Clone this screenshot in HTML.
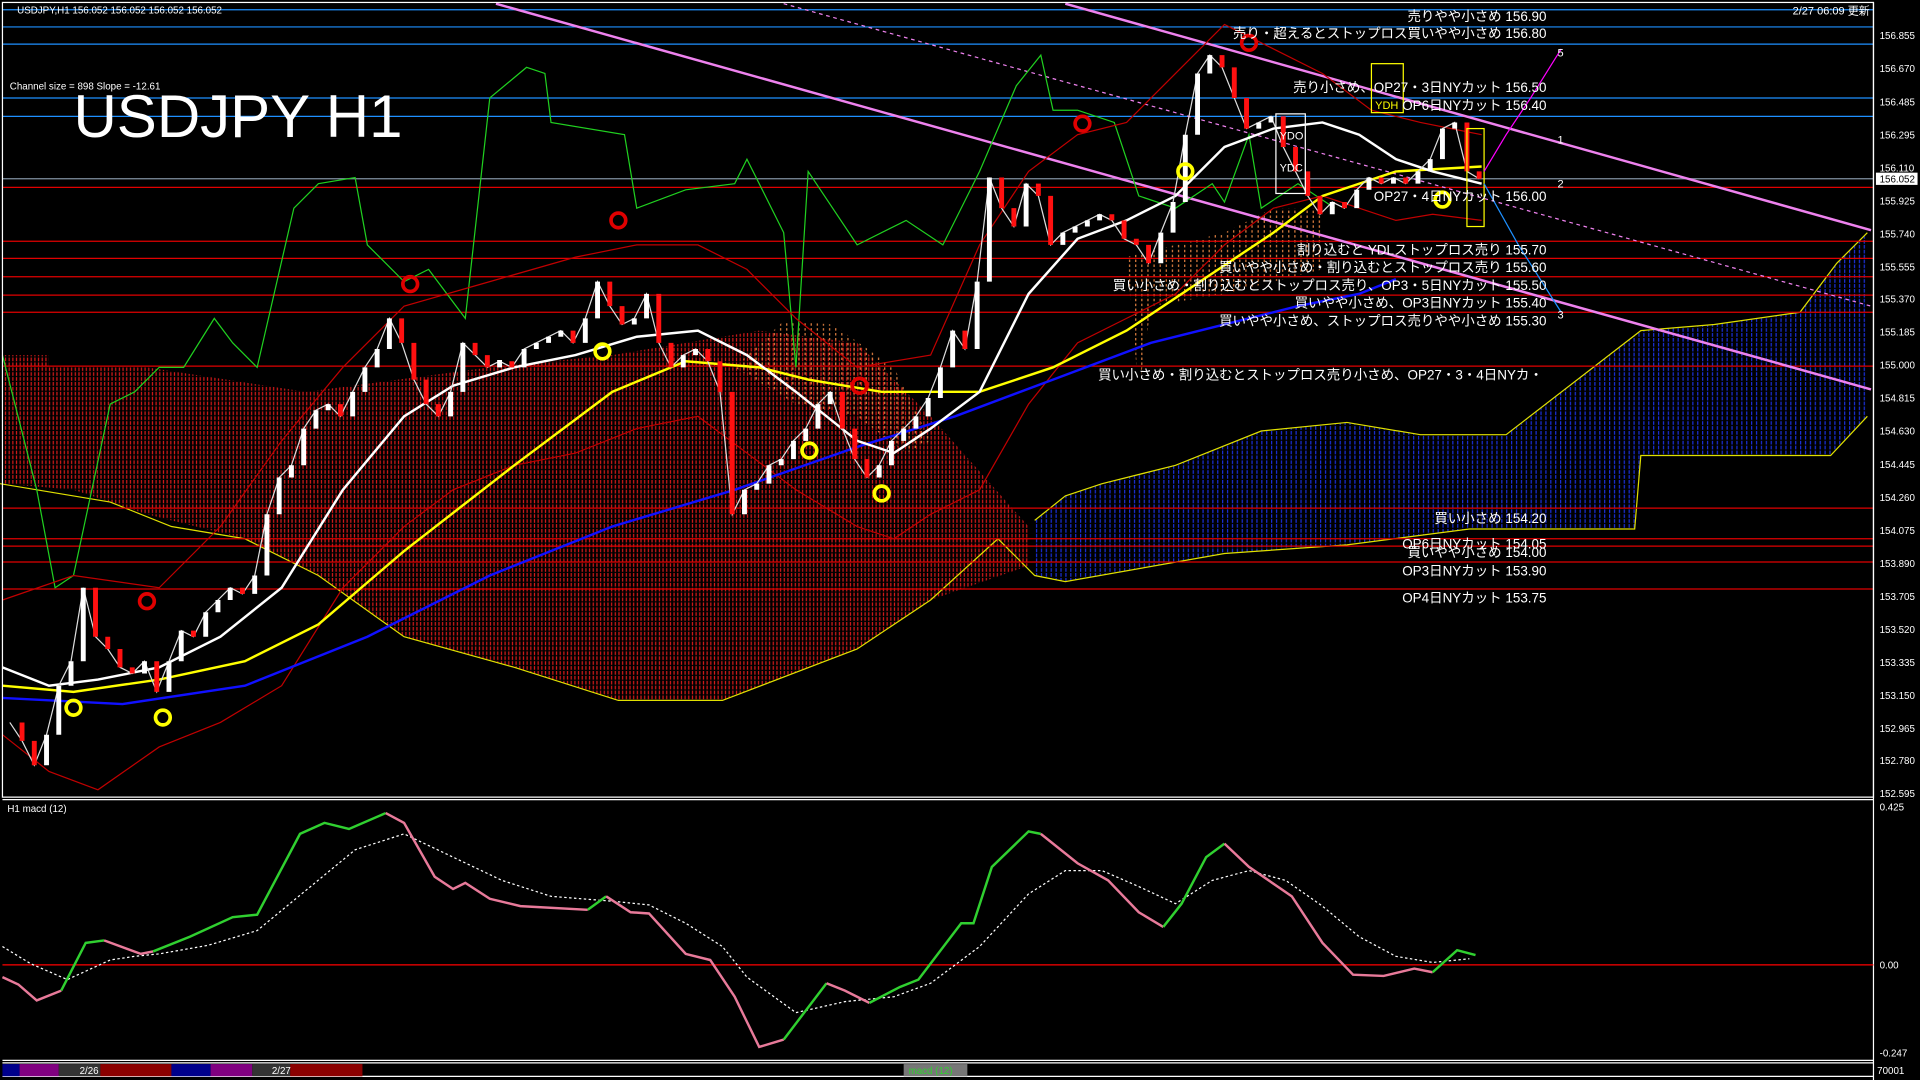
<!DOCTYPE html>
<html><head><meta charset="utf-8"><style>
html,body{margin:0;padding:0;background:#000;overflow:hidden}
svg{display:block}
text{font-family:"Liberation Sans","Noto Sans CJK JP",sans-serif;fill:#fff}
</style></head><body>
<svg width="1920" height="1080" viewBox="0 0 1568 882" preserveAspectRatio="none" xmlns="http://www.w3.org/2000/svg">
<defs>
<pattern id="rd" width="3" height="4" patternUnits="userSpaceOnUse"><rect x="1" y="0" width="1" height="3" fill="#d41a1a"/></pattern>
<pattern id="od" width="5" height="4" patternUnits="userSpaceOnUse"><rect x="2" y="0" width="1" height="2" fill="#e08040"/></pattern>
<pattern id="bd" width="4" height="4" patternUnits="userSpaceOnUse"><rect x="2" y="0" width="1" height="3" fill="#1a2fd8"/></pattern>
</defs>
<rect width="1568" height="882" fill="#000"/>
<!-- clouds -->
<polygon fill="url(#rd)" points="2,290 40,290 40,300 120,300 250,320 400,300 500,290 620,270 700,280 760,340 840,430 840,462 760,490 700,530 590,572 505,572 420,545 330,520 260,470 200,440 120,420 60,400 2,395"/>
<polygon fill="url(#od)" points="600,300 640,262 680,265 730,300 760,360 740,370 700,340 650,330"/>
<polygon fill="url(#od)" points="920,210 960,200 1000,190 1040,170 1080,170 1080,220 1000,240 940,250 930,320"/>
<polygon fill="url(#bd)" points="845,425 870,405 900,395 960,380 1030,352 1100,345 1160,355 1230,355 1340,270 1400,265 1470,255 1500,215 1525,190 1525,340 1495,372 1340,372 1335,432 1200,432 1100,445 1000,452 870,475 845,470"/>
<polyline fill="none" stroke="#e0e000" stroke-width="1" points="845,425 870,405 900,395 960,380 1030,352 1100,345 1160,355 1230,355 1340,270 1400,265 1470,255 1500,215 1525,190"/>
<polyline fill="none" stroke="#e0e000" stroke-width="1" points="0,395 90,410 140,430 200,440 260,470 330,520 420,545 505,572 590,572 700,530 760,490 815,440 845,470 870,475 1000,452 1100,445 1200,432 1335,432 1340,372 1495,372 1525,340"/>
<!-- horizontal lines -->
<g stroke="#1e90ff" stroke-width="1"><line x1="2" y1="8" x2="1530" y2="8"/><line x1="2" y1="22" x2="1530" y2="22"/><line x1="2" y1="36" x2="1530" y2="36"/><line x1="2" y1="80" x2="1530" y2="80"/><line x1="2" y1="95" x2="1530" y2="95"/></g>
<line x1="2" y1="146" x2="1530" y2="146" stroke="#8090a0"/>
<g stroke="#e00000" stroke-width="1"><line x1="2" y1="153" x2="1530" y2="153"/><line x1="2" y1="197" x2="1530" y2="197"/><line x1="2" y1="211" x2="1530" y2="211"/><line x1="2" y1="226" x2="1530" y2="226"/><line x1="2" y1="241" x2="1530" y2="241"/><line x1="2" y1="255" x2="1530" y2="255"/><line x1="2" y1="299" x2="1530" y2="299"/><line x1="2" y1="415" x2="1530" y2="415"/><line x1="2" y1="440" x2="1530" y2="440"/><line x1="2" y1="446" x2="1530" y2="446"/><line x1="2" y1="459" x2="1530" y2="459"/><line x1="2" y1="481" x2="1530" y2="481"/></g>
<!-- channel lines -->
<line x1="405" y1="3" x2="1528" y2="318" stroke="#ee82ee" stroke-width="2"/>
<line x1="870" y1="3" x2="1528" y2="188" stroke="#ee82ee" stroke-width="2"/>
<line x1="640" y1="3" x2="1528" y2="250" stroke="#ee82ee" stroke-width="1" stroke-dasharray="3,3"/>
<!-- green line -->
<polyline fill="none" stroke="#20d020" stroke-width="1" points="2,290 30,400 45,480 60,470 90,330 110,320 130,300 150,300 175,260 190,280 210,300 240,170 260,150 290,145 300,200 330,230 350,220 380,260 400,80 430,55 445,60 450,100 510,110 520,170 560,155 600,150 610,130 640,190 650,300 660,140 700,200 740,180 770,200 800,140 830,70 850,45 860,90 880,90 910,100 920,130 930,160 960,170 990,150 1000,165 1020,110 1030,170 1060,150 1090,170"/>
<!-- bollinger red -->
<polyline fill="none" stroke="#c00000" stroke-width="1" points="2,490 60,470 130,480 180,430 230,360 280,300 330,250 400,230 470,210 520,200 570,200 610,220 650,260 700,300 760,290 800,200 840,140 880,110 920,100 960,60 1000,20 1040,40 1080,60 1120,90 1160,100 1210,110"/>
<polyline fill="none" stroke="#c00000" stroke-width="1" points="2,600 40,630 80,645 130,610 180,590 230,560 280,480 330,430 370,400 420,380 470,370 520,350 570,340 610,370 650,400 700,430 730,440 760,420 800,400 840,330 880,280 920,260 960,240 1000,200 1040,170 1080,160 1110,170 1140,180 1170,175 1210,180"/>
<!-- MAs -->
<polyline fill="none" stroke="#1010ff" stroke-width="2" points="2,570 100,575 200,560 300,520 400,470 500,430 600,400 700,365 780,340 860,310 940,280 1000,265 1060,250 1110,240 1140,228"/>
<polyline fill="none" stroke="#ffff00" stroke-width="2" points="2,560 60,565 130,555 200,540 260,510 330,450 420,380 500,320 560,295 620,300 660,310 720,320 800,320 860,300 920,270 980,230 1040,190 1080,160 1140,140 1210,136"/>
<polyline fill="none" stroke="#ffffff" stroke-width="2" points="2,545 40,560 80,555 130,545 180,520 230,480 280,400 330,340 370,315 420,300 470,290 520,275 570,270 610,290 650,320 700,360 730,370 760,350 800,320 840,240 880,195 920,180 960,160 1000,120 1040,105 1080,100 1110,110 1140,130 1170,140 1210,150"/>
<!-- candles -->
<polyline fill="none" stroke="#ddd" stroke-width="1" points="8,590 18,605 28,625 38,600 48,560 58,540 68,480 78,520 88,530 98,545 108,550 118,540 128,565 138,540 148,515 158,520 168,500 178,490 188,480 198,485 208,470 218,420 228,390 238,380 248,350 258,335 268,330 278,340 288,320 298,300 308,285 318,260 328,280 338,310 348,330 358,340 368,320 378,280 388,290 398,300 408,295 418,300 428,285 438,280 448,275 458,270 468,280 478,260 488,230 498,250 508,265 518,260 528,240 538,280 548,300 558,290 568,285 578,295 588,320 598,420 608,400 618,395 628,380 638,375 648,360 658,350 668,330 678,320 688,350 698,375 708,390 718,380 728,360 738,350 748,340 758,325 768,300 778,270 788,285 798,230 808,145 818,170 828,185 838,150 848,160 858,200 868,190 878,185 888,180 898,175 908,180 918,195 928,200 938,215 948,190 958,165 968,110 978,60 988,45 998,55 1008,80 1018,105 1028,100 1038,95 1048,120 1058,140 1068,160 1078,175 1088,165 1098,170 1108,155 1118,145 1128,150 1138,145 1148,150 1158,140 1168,130 1178,105 1188,100 1198,140 1208,146"/>
<path fill="none" stroke="#ffffff" stroke-width="4" d="M38,600V625M48,560V600M58,540V560M68,480V540M118,540V550M138,540V565M148,515V540M168,500V520M178,490V500M188,480V490M208,470V485M218,420V470M228,390V420M238,380V390M248,350V380M258,335V350M268,330V335M288,320V340M298,300V320M308,285V300M318,260V285M368,320V340M378,280V320M408,294V300M428,285V300M438,280V285M448,275V280M458,270V275M478,260V280M488,230V260M518,260V265M528,240V260M558,290V300M568,285V290M608,400V420M618,395V400M628,380V395M638,375V380M648,360V375M658,350V360M668,330V350M678,320V330M718,380V390M728,360V380M738,350V360M748,340V350M758,325V340M768,300V325M778,270V300M798,230V285M808,145V230M838,150V185M868,190V200M878,185V190M888,180V185M898,175V180M948,190V215M958,165V190M968,110V165M978,60V110M988,45V60M1028,100V105M1038,95V100M1088,165V175M1108,155V170M1118,145V155M1138,145V150M1158,140V150M1168,130V140M1178,105V130M1188,100V105"/>
<path fill="none" stroke="#ff1010" stroke-width="4" d="M18,590V605M28,605V625M78,480V520M88,520V530M98,530V545M108,545V550M128,540V565M158,515V520M198,480V485M278,330V340M328,260V280M338,280V310M348,310V330M358,330V340M388,280V290M398,290V300M418,295V300M468,270V280M498,230V250M508,250V265M538,240V280M548,280V300M578,285V295M588,295V320M598,320V420M688,320V350M698,350V375M708,375V390M788,270V285M818,145V170M828,170V185M848,150V160M858,160V200M908,175V180M918,180V195M928,195V200M938,200V215M998,45V55M1008,55V80M1018,80V105M1048,95V120M1058,120V140M1068,140V160M1078,160V175M1098,165V170M1128,145V150M1148,145V150M1198,100V140M1208,140V146"/>
<!-- markers -->
<g fill="none" stroke-width="3"><circle cx="505" cy="180" r="6" stroke="#e00000"/><circle cx="335" cy="232" r="6" stroke="#e00000"/><circle cx="120" cy="491" r="6" stroke="#e00000"/><circle cx="884" cy="101" r="6" stroke="#e00000"/><circle cx="702" cy="315" r="6" stroke="#e00000"/><circle cx="1020" cy="35" r="6" stroke="#e00000"/>
<circle cx="60" cy="578" r="6" stroke="#ffff00"/><circle cx="133" cy="586" r="6" stroke="#ffff00"/><circle cx="492" cy="287" r="6" stroke="#ffff00"/><circle cx="661" cy="368" r="6" stroke="#ffff00"/><circle cx="720" cy="403" r="6" stroke="#ffff00"/><circle cx="968" cy="140" r="6" stroke="#ffff00"/><circle cx="1178" cy="163" r="6" stroke="#ffff00"/></g>
<!-- boxes -->
<rect x="1120" y="52" width="26" height="40" fill="none" stroke="#ffff00"/>
<text x="1123" y="89" font-size="9" style="fill:#ffff00">YDH</text>
<rect x="1198" y="105" width="14" height="80" fill="none" stroke="#ffff00"/>
<rect x="1042" y="93" width="24" height="65" fill="none" stroke="#fff"/>
<text x="1045" y="114" font-size="9">YDO</text><text x="1045" y="140" font-size="9">YDC</text>
<polyline fill="none" stroke="#ff00ff" stroke-width="1" points="1212,140 1230,110 1250,80 1275,40"/>
<polyline fill="none" stroke="#1e90ff" stroke-width="1" points="1212,150 1240,200 1275,255"/>
<text x="1272" y="117" font-size="9">1</text><text x="1272" y="153" font-size="9">2</text><text x="1272" y="260" font-size="9">3</text><text x="1272" y="46" font-size="9">5</text>
<!-- labels -->
<g font-size="11" text-anchor="end">
<text x="1263" y="17">売りやや小さめ 156.90</text>
<text x="1263" y="31">売り・超えるとストップロス買いやや小さめ 156.80</text>
<text x="1263" y="75">売り小さめ、OP27・3日NYカット 156.50</text>
<text x="1263" y="90">OP6日NYカット 156.40</text>
<text x="1263" y="164">OP27・4日NYカット 156.00</text>
<text x="1263" y="208">割り込むと YDLストップロス売り 155.70</text>
<text x="1263" y="222">買いやや小さめ・割り込むとストップロス売り 155.60</text>
<text x="1263" y="237">買い小さめ・割り込むとストップロス売り、OP3・5日NYカット 155.50</text>
<text x="1263" y="251">買いやや小さめ、OP3日NYカット 155.40</text>
<text x="1263" y="266">買いやや小さめ、ストップロス売りやや小さめ 155.30</text>
<text x="1260" y="310">買い小さめ・割り込むとストップロス売り小さめ、OP27・3・4日NYカ・</text>
<text x="1263" y="427">買い小さめ 154.20</text>
<text x="1263" y="448">OP6日NYカット 154.05</text>
<text x="1263" y="455">買いやや小さめ 154.00</text>
<text x="1263" y="470">OP3日NYカット 153.90</text>
<text x="1263" y="492">OP4日NYカット 153.75</text>
</g>
<text x="14" y="11" font-size="8">USDJPY,H1  156.052 156.052 156.052 156.052</text>
<text x="8" y="73" font-size="8">Channel size = 898 Slope = -12.61</text>
<text x="60" y="112" font-size="49">USDJPY H1</text>
<text x="1527" y="12" font-size="9" text-anchor="end">2/27 06:09 更新</text>
<!-- axis -->
<g font-size="8">
<text x="1535" y="32">156.855</text><text x="1535" y="59">156.670</text><text x="1535" y="86">156.485</text><text x="1535" y="113">156.295</text><text x="1535" y="140">156.110</text><text x="1535" y="167">155.925</text><text x="1535" y="194">155.740</text><text x="1535" y="221">155.555</text><text x="1535" y="247">155.370</text><text x="1535" y="274">155.185</text><text x="1535" y="301">155.000</text><text x="1535" y="328">154.815</text><text x="1535" y="355">154.630</text><text x="1535" y="382">154.445</text><text x="1535" y="409">154.260</text><text x="1535" y="436">154.075</text><text x="1535" y="463">153.890</text><text x="1535" y="490">153.705</text><text x="1535" y="517">153.520</text><text x="1535" y="544">153.335</text><text x="1535" y="571">153.150</text><text x="1535" y="598">152.965</text><text x="1535" y="624">152.780</text><text x="1535" y="651">152.595</text>
<text x="1535" y="662">0.425</text><text x="1535" y="791">0.00</text><text x="1535" y="863">-0.247</text><text x="1533" y="877">70001</text>
</g>
<rect x="1532" y="141" width="34" height="10" fill="#fff"/>
<text x="1535" y="149" font-size="8" style="fill:#000">156.052</text>
<!-- frames -->
<g stroke="#fff" stroke-width="1" fill="none">
<rect x="2" y="2" width="1528" height="649"/>
<line x1="2" y1="653" x2="1530" y2="653"/><line x1="2" y1="866" x2="1530" y2="866"/><line x1="2" y1="868" x2="1530" y2="868"/><line x1="2" y1="879" x2="1530" y2="879"/>
<line x1="1530" y1="2" x2="1530" y2="882"/>
</g>
<!-- MACD -->
<text x="6" y="663" font-size="8">H1  macd (12)</text>
<line x1="2" y1="788" x2="1530" y2="788" stroke="#ff0000" stroke-width="1"/>
<polyline fill="none" stroke="#fff" stroke-width="1" stroke-dasharray="2,2" points="2,773 25,787 55,800 90,784 110,781 130,779 170,772 210,760 250,727 290,694 330,681 370,700 410,719 450,732 500,736 530,739 560,754 590,773 610,798 650,827 690,818 730,814 760,803 800,773 840,730 870,711 900,711 930,724 960,738 990,719 1020,711 1050,719 1080,740 1110,765 1140,781 1170,786 1200,783"/>
<g fill="none" stroke-width="2">
<polyline stroke="#e87a9a" points="2,798 15,804 30,817 50,809"/>
<polyline stroke="#30d030" points="50,809 70,770 85,768"/>
<polyline stroke="#e87a9a" points="85,768 115,779 125,777"/>
<polyline stroke="#30d030" points="125,777 155,765 190,749 210,747 245,681 265,672 285,677 315,664"/>
<polyline stroke="#e87a9a" points="315,664 330,672 355,716 370,726 380,721 400,734 425,740 480,743"/>
<polyline stroke="#30d030" points="480,743 495,732"/>
<polyline stroke="#e87a9a" points="495,732 515,745 530,746 560,779 580,784 600,814 620,855 640,849"/>
<polyline stroke="#30d030" points="640,849 675,803"/>
<polyline stroke="#e87a9a" points="675,803 690,809 710,819"/>
<polyline stroke="#30d030" points="710,819 735,806 750,800 785,754 795,754 810,708 840,679 850,681"/>
<polyline stroke="#e87a9a" points="850,681 880,705 905,719 930,745 950,757"/>
<polyline stroke="#30d030" points="950,757 965,738 985,700 1000,689"/>
<polyline stroke="#e87a9a" points="1000,689 1020,708 1055,732 1080,770 1105,796 1130,797 1155,791 1170,794"/>
<polyline stroke="#30d030" points="1170,794 1190,776 1205,780"/>
</g>
<!-- bottom bar -->
<rect x="2" y="869" width="14" height="10" fill="#00008b"/><rect x="16" y="869" width="32" height="10" fill="#800080"/><rect x="48" y="869" width="34" height="10" fill="#333"/><rect x="82" y="869" width="58" height="10" fill="#8b0000"/><rect x="140" y="869" width="32" height="10" fill="#00008b"/><rect x="172" y="869" width="34" height="10" fill="#800080"/><rect x="206" y="869" width="31" height="10" fill="#333"/><rect x="237" y="869" width="59" height="10" fill="#8b0000"/>
<text x="65" y="877" font-size="8">2/26</text><text x="222" y="877" font-size="8">2/27</text>
<rect x="738" y="869" width="52" height="10" fill="#777"/><text x="742" y="877" font-size="8" style="fill:#30d030">macd (12)</text>
</svg>
</body></html>
